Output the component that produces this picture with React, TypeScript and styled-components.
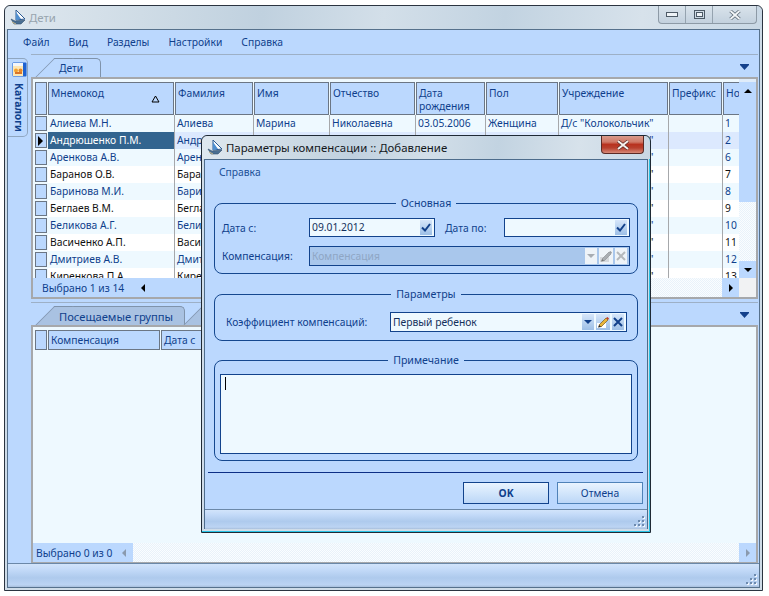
import styled, { createGlobalStyle } from 'styled-components';

const FONT = `"Noto Sans", "DejaVu Sans", sans-serif`;
const SIZE = '10.3px';
const NAVY = '#0f3f8c';
const PANEL = '#bbd8fe';
const LIGHT = '#eef9ff';
const GRAY = '#a6a8ab';
const HEAD_LINE = '#6b7684';

const Global = createGlobalStyle`
  html, body { margin: 0; padding: 0; background: #fff; }
  body { font: ${SIZE} ${FONT}; color: ${NAVY}; width: 769px; height: 596px; overflow: hidden; position: relative; }
`;

const Window = styled.div`
  width: 759px;
  height: 586px;
  margin: 5px 0 0 4px;
  box-sizing: border-box;
  border: 1px solid #2b3440;
  border-radius: 6px 6px 0 0;
  background: #cfdce8;
  display: flex;
  flex-direction: column;
  padding: 0 2px 2px;
`;

const TitleBar = styled.div<{ $dialog?: boolean }>`
  height: 23px;
  flex: none;
  display: flex;
  align-items: center;
  gap: 2px;
  font-size: 11.4px;
  color: ${(p) => (p.$dialog ? '#14181c' : '#98a4ae')};
  margin: 0 -2px;
  padding-left: 5px;
  border-radius: 6px 6px 0 0;
  background: linear-gradient(96deg, #dfe8ef 0%, #cfdce6 18%, #c0d1df 34%, #d3dfe9 50%, #c2d3e1 66%, #d7e2eb 84%, #c9d8e5 100%);
`;

const Title = styled.span`
  white-space: nowrap;
`;

const CaptionButtons = styled.div`
  margin-left: auto;
  margin-right: 5px;
  align-self: flex-start;
  display: flex;
  height: 17px;
  border: 1px solid #8d9aa6;
  border-top: none;
  border-radius: 0 0 4px 4px;
  background: linear-gradient(#d9e3eb, #c3d1de);
`;

const CaptionButton = styled.div<{ $w: number }>`
  width: ${(p) => p.$w}px;
  display: flex;
  align-items: center;
  justify-content: center;
  & + & { border-left: 1px solid #95a3af; }
`;

const CloseButton = styled.div`
  position: absolute;
  top: 0;
  right: 6px;
  width: 43px;
  height: 18px;
  box-sizing: border-box;
  border: 1px solid #5b2a25;
  border-top: none;
  border-radius: 0 0 4px 4px;
  background: linear-gradient(#d99a8c 0%, #d07a68 35%, #b8321f 50%, #b8402e 70%, #d88a78 100%);
  display: flex;
  align-items: center;
  justify-content: center;
`;

const Client = styled.div`
  flex: 1;
  min-height: 0;
  border: 1px solid #56718c;
  background: ${PANEL};
  display: flex;
  flex-direction: column;
`;

const MenuBar = styled.div`
  height: 24px;
  flex: none;
  display: flex;
  align-items: center;
  padding-left: 15px;
  gap: 19px;
`;

const MenuItem = styled.span`
  color: ${NAVY};
`;

const Body = styled.div`
  flex: 1;
  min-height: 0;
  display: flex;
`;

const Rail = styled.div`
  width: 23px;
  flex: none;
  padding-top: 4px;
`;

const RailTab = styled.div`
  width: 20px;
  height: 79px;
  box-sizing: border-box;
  border: 1px solid #8fa6c0;
  border-left: none;
  border-radius: 0 5px 5px 0;
  padding: 3px 0 0 3px;
  display: flex;
  flex-direction: column;
  align-items: center;
  gap: 6px;
`;

const RailLabel = styled.span`
  writing-mode: vertical-rl;
  font-weight: bold;
  line-height: 14px;
  color: ${NAVY};
`;

const Main = styled.div`
  flex: 1;
  min-width: 0;
  display: flex;
  flex-direction: column;
  margin-right: 1px;
`;

const TabStrip = styled.div<{ $h: number }>`
  height: ${(p) => p.$h}px;
  flex: none;
  box-sizing: border-box;
  border-top: 1px solid #9db0c6;
  border-bottom: 2px solid ${GRAY};
  display: flex;
  align-items: flex-end;
  justify-content: space-between;
  padding: 0 9px 0 24px;
`;

const Tabs = styled.div`
  display: flex;
  gap: 18px;
`;

const Tab = styled.div<{ $active?: boolean; $w: number }>`
  position: relative;
  width: ${(p) => p.$w}px;
  height: 19px;
  box-sizing: border-box;
  border: 1px solid #7f93ab;
  border-bottom: none;
  border-left: none;
  border-radius: 0 5px 0 0;
  background: ${(p) => (p.$active ? PANEL : '#a9c2e2')};
  color: ${NAVY};
  font-size: ${(p) => (p.$active ? SIZE : '11.2px')};
  display: flex;
  align-items: center;
  padding-left: 4px;
  white-space: nowrap;

  &::before {
    content: '';
    position: absolute;
    left: -10px;
    top: -1px;
    bottom: 0;
    width: 18px;
    background: ${(p) => (p.$active ? PANEL : '#a9c2e2')};
    border-left: 1px solid #7f93ab;
    border-top: 1px solid #7f93ab;
    transform: skewX(-45deg);
    z-index: 0;
  }
`;

const TabText = styled.span`
  position: relative;
  z-index: 1;
`;

const StripArrow = styled.svg`
  margin-bottom: 7px;
`;

const Frame = styled.div<{ $h: number }>`
  height: ${(p) => p.$h}px;
  flex: none;
  box-sizing: border-box;
  border: 2px solid ${GRAY};
  border-top: none;
  display: flex;
  flex-direction: column;
  background: ${LIGHT};
`;

const GridArea = styled.div`
  flex: 1;
  min-height: 0;
  display: flex;
  background: #dfecfa;
`;

const Table = styled.div`
  flex: 1;
  min-width: 0;
  overflow: hidden;
  padding: 3px 0 0 2px;
  background: ${LIGHT};
`;

const Row = styled.div<{ $cols: number[] }>`
  display: grid;
  grid-template-columns: ${(p) => p.$cols.map((c) => `${c}px`).join(' ')};
`;

const HeadCell = styled.div<{ $h: number; $pad: number; $open?: boolean }>`
  position: relative;
  height: ${(p) => p.$h}px;
  box-sizing: border-box;
  margin-right: ${(p) => (p.$open ? 0 : 1)}px;
  border: 1px solid ${HEAD_LINE};
  ${(p) => (p.$open ? 'border-right: none;' : '')}
  background: ${PANEL};
  color: ${NAVY};
  padding: ${(p) => p.$pad}px 0 0 2px;
  line-height: 13px;
  overflow: hidden;
  white-space: pre-line;
`;

const SortMark = styled.svg`
  position: absolute;
  right: 13px;
  bottom: 11px;
`;

const Indicator = styled.div`
  height: 17px;
  padding-right: 1px;
  box-sizing: border-box;
  display: flex;
`;

const IndicatorBox = styled.div`
  flex: 1;
  margin: 1px 0 0;
  height: 15px;
  box-sizing: border-box;
  border: 1px solid ${HEAD_LINE};
  background: ${PANEL};
  display: flex;
  align-items: center;
  padding-left: 2px;
`;

const Cell = styled.div<{ $odd: boolean; $current: boolean; $selected: boolean }>`
  height: 17px;
  box-sizing: border-box;
  padding-left: 2px;
  line-height: 16px;
  white-space: nowrap;
  overflow: hidden;
  border-right: 1px solid ${GRAY};
  background: ${(p) => (p.$selected ? '#32648f' : p.$current ? '#dce9fe' : p.$odd ? LIGHT : '#fff')};
  color: ${(p) => (p.$selected ? '#fff' : p.$odd || p.$current ? NAVY : '#111')};

  &:last-child { border-right: none; }
`;

const VScroll = styled.div`
  width: 17px;
  flex: none;
  margin-top: 3px;
  display: flex;
  flex-direction: column;
`;

const ScrollButton = styled.div`
  flex: none;
  width: 17px;
  height: 17px;
  background: ${PANEL};
  display: flex;
  align-items: center;
  justify-content: center;
`;

const HScrollButton = styled(ScrollButton)`
  height: auto;
`;

const Thumb = styled.div`
  height: 103px;
  flex: none;
  background: ${PANEL};
`;

const Track = styled.div`
  flex: 1;
  min-width: 0;
  background-color: #f4f9fd;
  background-image: repeating-conic-gradient(#e9f2fa 0 25%, #fafdff 0 50%);
  background-size: 2px 2px;
`;

const HRow = styled.div`
  height: 19px;
  flex: none;
  display: flex;
`;

const Selected = styled.div<{ $w: number; $pad: number; $gap: number }>`
  width: ${(p) => p.$w}px;
  flex: none;
  background: ${PANEL};
  display: flex;
  align-items: center;
  padding-left: ${(p) => p.$pad}px;
  box-sizing: border-box;
  color: ${NAVY};
  white-space: nowrap;
  gap: ${(p) => p.$gap}px;
`;

const Corner = styled.div`
  width: 17px;
  flex: none;
  background: #f1f2f3;
`;

const StripGap = styled.div`
  height: 3px;
  flex: none;
`;

const GripBar = styled.div<{ $h: number }>`
  height: ${(p) => p.$h}px;
  flex: none;
  box-sizing: border-box;
  border-top: 1px solid #6b88a8;
  background: linear-gradient(#d2e4fb 0%, #c3daf8 25%, #aecaed 60%, #bcd4f3 90%, #a8bfdc 100%);
  display: flex;
  justify-content: flex-end;
  align-items: flex-end;
  padding: 0 2px 2px 0;
`;

const Dialog = styled.div`
  position: absolute;
  left: 201px;
  top: 135px;
  width: 450px;
  height: 398px;
  box-sizing: border-box;
  border: 1px solid #1f2a35;
  border-radius: 6px 6px 0 0;
  background: #cfdce8;
  box-shadow: inset -1px -1px 0 #27c3e6;
  padding: 0 2px 3px;
  display: flex;
  flex-direction: column;
`;

const DialogClient = styled.div`
  flex: 1;
  min-height: 0;
  border: 1px solid #4d6c8c;
  background: ${PANEL};
  display: flex;
  flex-direction: column;
`;

const DialogMenu = styled.div`
  height: 24px;
  flex: none;
  display: flex;
  align-items: center;
  padding-left: 14px;
  color: #1c5096;
`;

const Group = styled.fieldset<{ $h: number; $top: number }>`
  margin: ${(p) => p.$top}px 9px 0;
  height: ${(p) => p.$h}px;
  box-sizing: border-box;
  padding: 0;
  border: 1px solid #15488f;
  border-radius: 8px;
  flex: none;
  min-width: 0;
`;

const Legend = styled.legend`
  margin: 0 auto;
  padding: 0 5px;
  font-size: 10.6px;
  line-height: 14px;
  color: ${NAVY};
`;

const MainFields = styled.div`
  display: grid;
  grid-template-columns: 87px 126px 69px 126px;
  row-gap: 9px;
  padding: 8px 0 0 7px;
  align-items: center;
`;

const FieldLabel = styled.label<{ $pad?: number }>`
  color: ${NAVY};
  padding-left: ${(p) => p.$pad ?? 0}px;
  white-space: nowrap;
`;

const Input = styled.div<{ $h: number; $disabled?: boolean; $span?: number }>`
  height: ${(p) => p.$h}px;
  box-sizing: border-box;
  border: 1px solid #12438c;
  background: ${(p) => (p.$disabled ? '#a9c7ec' : LIGHT)};
  color: ${(p) => (p.$disabled ? '#8fa6c4' : '#14305c')};
  display: flex;
  align-items: center;
  padding: 1px 2px;
  gap: 2px;
  ${(p) => (p.$span ? `grid-column: span ${p.$span};` : '')}
`;

const InputText = styled.span`
  flex: 1;
  min-width: 0;
  white-space: nowrap;
  margin-bottom: 1px;
`;

const InputButton = styled.div<{ $w: number; $disabled?: boolean }>`
  width: ${(p) => p.$w}px;
  align-self: stretch;
  flex: none;
  display: flex;
  align-items: center;
  justify-content: center;
  background: ${(p) => (p.$disabled ? '#eef3f8' : 'linear-gradient(#d6e6fa, #9dbfe6)')};
`;

const ParamRow = styled.div`
  display: flex;
  align-items: center;
  padding: 11px 10px 0 11px;
`;

const ParamLabel = styled(FieldLabel)`
  width: 164px;
  flex: none;
`;

const ParamInput = styled(Input)`
  flex: 1;
`;

const NoteWrap = styled.div`
  padding: 7px 5px 0;
`;

const NoteBox = styled.div`
  height: 80px;
  box-sizing: border-box;
  border: 1px solid #12438c;
  background: ${LIGHT};
  padding: 2px 4px;
`;

const Caret = styled.div`
  width: 1px;
  height: 13px;
  background: #000;
`;

const Separator = styled.div`
  height: 1px;
  flex: none;
  margin: 11px 4px 0 3px;
  background: #0c2f86;
`;

const ButtonRow = styled.div`
  display: flex;
  justify-content: flex-end;
  gap: 8px;
  flex: none;
  margin: 9px 4px 5px 0;
`;

const DialogButton = styled.button<{ $primary?: boolean }>`
  width: 86px;
  height: 22px;
  box-sizing: border-box;
  padding: 0 0 1px;
  font: ${(p) => (p.$primary ? 'bold' : 'normal')} ${SIZE} ${FONT};
  color: ${NAVY};
  border: 1px solid ${(p) => (p.$primary ? '#12438c' : '#4f82b8')};
  background: linear-gradient(#e9f4ff, #bcd7f7);
`;

const Logo = () => (
  <svg width="17" height="17" viewBox="0 0 17 17">
    <path d="M6 1 L15 10 L6 11 Z" fill="#fff" stroke="#2a5a94" strokeWidth="1" />
    <path d="M6 3 L6 11 L11 10 Z" fill="#4f8fd0" />
    <path d="M1 10 L5 12 L15 11 L11 15 L4 15 Z" fill="#4a6f92" stroke="#34506e" strokeWidth="0.6" />
    <path d="M2 13 L6 15" stroke="#c9b98a" strokeWidth="1" />
  </svg>
);

const RailIcon = () => (
  <svg width="15" height="15" viewBox="0 0 15 15">
    <rect x="0.5" y="0.5" width="14" height="14" rx="1" fill="#1f62d0" />
    <rect x="1" y="1" width="10" height="13" fill="#fde7b4" />
    <rect x="1" y="1" width="10" height="3" fill="#f3f6fb" />
    <circle cx="4" cy="8.5" r="2" fill="#f2a12e" />
    <circle cx="8.5" cy="8.5" r="2" fill="#e8882a" />
    <rect x="3" y="10" width="7" height="2" fill="#d9742a" />
  </svg>
);

const Triangle = ({ dir, color = '#000', size = 4 }: { dir: 'up' | 'down' | 'left' | 'right'; color?: string; size?: number }) => {
  const points = {
    up: `0,${size} ${size},0 ${size * 2},${size}`,
    down: `0,0 ${size},${size} ${size * 2},0`,
    left: `${size},0 ${size},${size * 2} 0,${size}`,
    right: `0,0 ${size},${size} 0,${size * 2}`,
  }[dir];
  const horizontal = dir === 'up' || dir === 'down';
  return (
    <svg width={horizontal ? size * 2 : size} height={horizontal ? size : size * 2}>
      <polygon points={points} fill={color} />
    </svg>
  );
};

const CheckIcon = () => (
  <svg width="10" height="9" viewBox="0 0 10 9">
    <path d="M1 4.5 L4 7.5 L9 1" fill="none" stroke="#12408a" strokeWidth="2" />
  </svg>
);

const CrossIcon = ({ color }: { color: string }) => (
  <svg width="10" height="10" viewBox="0 0 10 10">
    <path d="M1 1 L9 9 M9 1 L1 9" stroke={color} strokeWidth="2" />
  </svg>
);

const PencilIcon = ({ muted }: { muted?: boolean }) => (
  <svg width="12" height="12" viewBox="0 0 12 12">
    <rect x="0" y="7" width="9" height="5" fill={muted ? '#d5d8dc' : '#fff'} />
    <path d="M2 9 L9 2 L11 4 L4 11 Z" fill={muted ? '#a9adb2' : '#e8b53a'} stroke={muted ? '#8f9398' : '#7a5a20'} strokeWidth="0.7" />
    <path d="M9 2 L11 4 L12 2.5 L10.5 1 Z" fill={muted ? '#9a9ea3' : '#c2402c'} />
    <path d="M2 9 L1 11.5 L4 11 Z" fill={muted ? '#777' : '#222'} />
  </svg>
);

const Grip = () => (
  <svg width="11" height="11" viewBox="0 0 11 11">
    {[
      [8, 0],
      [4, 4],
      [8, 4],
      [0, 8],
      [4, 8],
      [8, 8],
    ].map(([x, y]) => (
      <g key={`${x}-${y}`}>
        <rect x={x + 1} y={y + 1} width="2" height="2" fill="#fff" opacity="0.8" />
        <rect x={x} y={y} width="2" height="2" fill="#6d8aae" />
      </g>
    ))}
  </svg>
);

const StripChevron = () => (
  <StripArrow width="9" height="6" viewBox="0 0 9 6">
    <path d="M0 0 H9 V1 L4.5 6 L0 1 Z" fill="#14418c" />
  </StripArrow>
);

const COLS = [13, 127, 79, 76, 86, 70, 73, 110, 54, 16];
const BOTTOM_COLS = [13, 113, 80];

const HEADERS = ['Мнемокод', 'Фамилия', 'Имя', 'Отчество', 'Дата\nрождения', 'Пол', 'Учреждение', 'Префикс', 'Но'];

const PEOPLE = [
  ['Алиева М.Н.', 'Алиева', 'Марина', 'Николаевна', '03.05.2006', 'Женщина', '1'],
  ['Андрюшенко П.М.', 'Андрюшенко', 'Полина', 'Михайловна', '12.02.2006', 'Женщина', '2'],
  ['Аренкова А.В.', 'Аренкова', 'Анна', 'Викторовна', '21.07.2006', 'Женщина', '6'],
  ['Баранов О.В.', 'Баранов', 'Олег', 'Викторович', '09.11.2005', 'Мужчина', '7'],
  ['Баринова М.И.', 'Баринова', 'Мария', 'Ивановна', '17.03.2006', 'Женщина', '8'],
  ['Беглаев В.М.', 'Беглаев', 'Виктор', 'Михайлович', '30.01.2006', 'Мужчина', '9'],
  ['Беликова А.Г.', 'Беликова', 'Анна', 'Геннадьевна', '14.06.2006', 'Женщина', '10'],
  ['Васиченко А.П.', 'Васиченко', 'Артём', 'Павлович', '05.09.2005', 'Мужчина', '11'],
  ['Дмитриев А.В.', 'Дмитриев', 'Антон', 'Васильевич', '26.04.2006', 'Женщина', '12'],
  ['Киренкова П.А.', 'Киренкова', 'Полина', 'Андреевна', '08.08.2006', 'Мужчина', '13'],
];

const App = () => {
  return (
    <>
      <Global />
      <Window>
        <TitleBar>
          <Logo />
          <Title>Дети</Title>
          <CaptionButtons>
            <CaptionButton $w={26}>
              <svg width="12" height="6"><rect x="0.5" y="0.5" width="11" height="4" fill="#eef3f7" stroke="#4d5a66" /></svg>
            </CaptionButton>
            <CaptionButton $w={26}>
              <svg width="11" height="10"><rect x="0.5" y="0.5" width="10" height="8" fill="none" stroke="#4d5a66" /><rect x="2.5" y="2.5" width="6" height="4" fill="#eef3f7" stroke="#4d5a66" /></svg>
            </CaptionButton>
            <CaptionButton $w={43}>
              <svg width="12" height="10" viewBox="0 0 12 10"><path d="M1.5 1 L10.5 9 M10.5 1 L1.5 9" stroke="#5b6874" strokeWidth="3.4" /><path d="M1.5 1 L10.5 9 M10.5 1 L1.5 9" stroke="#f3f6f8" strokeWidth="1.8" /></svg>
            </CaptionButton>
          </CaptionButtons>
        </TitleBar>
        <Client>
          <MenuBar>
            {['Файл', 'Вид', 'Разделы', 'Настройки', 'Справка'].map((m) => (
              <MenuItem key={m}>{m}</MenuItem>
            ))}
          </MenuBar>
          <Body>
            <Rail>
              <RailTab>
                <RailIcon />
                <RailLabel>Каталоги</RailLabel>
              </RailTab>
            </Rail>
            <Main>
              <TabStrip $h={25}>
                <Tabs>
                  <Tab $active $w={46}>
                    <TabText>Дети</TabText>
                  </Tab>
                </Tabs>
                <StripChevron />
              </TabStrip>
              <Frame $h={220}>
                <GridArea>
                  <Table>
                    <Row $cols={COLS}>
                      <HeadCell $h={33} $pad={4} />
                      {HEADERS.map((h, i) => (
                        <HeadCell $h={33} $pad={4} $open={i === HEADERS.length - 1} key={h}>
                          {h}
                          {i === 0 && (
                            <SortMark width="9" height="8" viewBox="0 0 9 8">
                              <path d="M4.5 1 L8 7 H1 Z" fill="none" stroke="#000" />
                            </SortMark>
                          )}
                        </HeadCell>
                      ))}
                    </Row>
                    {PEOPLE.map((p, i) => {
                      const odd = i % 2 === 0;
                      const current = i === 1;
                      const values = [p[0], p[1], p[2], p[3], p[4], p[5], 'Д/с "Колокольчик"', '', p[6]];
                      return (
                        <Row $cols={COLS} key={p[0]}>
                          <Indicator>
                            <IndicatorBox>{current && <Triangle dir="right" size={5} />}</IndicatorBox>
                          </Indicator>
                          {values.map((v, j) => (
                            <Cell key={j} $odd={odd} $current={current} $selected={current && j === 0}>
                              {v}
                            </Cell>
                          ))}
                        </Row>
                      );
                    })}
                  </Table>
                  <VScroll>
                    <ScrollButton>
                      <Triangle dir="up" />
                    </ScrollButton>
                    <Thumb />
                    <Track />
                    <ScrollButton>
                      <Triangle dir="down" />
                    </ScrollButton>
                  </VScroll>
                </GridArea>
                <HRow>
                  <Selected $w={172} $pad={9} $gap={17}>
                    Выбрано 1 из 14
                    <Triangle dir="left" />
                  </Selected>
                  <Track />
                  <HScrollButton>
                    <Triangle dir="right" />
                  </HScrollButton>
                  <Corner />
                </HRow>
              </Frame>
              <StripGap />
              <TabStrip $h={25}>
                <Tabs>
                  <Tab $w={130}>
                    <TabText>Посещаемые группы</TabText>
                  </Tab>
                  <Tab $w={90} />
                </Tabs>
                <StripChevron />
              </TabStrip>
              <Frame $h={237}>
                <GridArea>
                  <Table>
                    <Row $cols={BOTTOM_COLS}>
                      <HeadCell $h={20} $pad={3} />
                      <HeadCell $h={20} $pad={3}>Компенсация</HeadCell>
                      <HeadCell $h={20} $pad={3}>Дата с</HeadCell>
                    </Row>
                  </Table>
                </GridArea>
                <HRow>
                  <Selected $w={100} $pad={3} $gap={10}>
                    Выбрано 0 из 0
                    <Triangle dir="left" color="#8a9aae" />
                  </Selected>
                  <Track />
                  <HScrollButton>
                    <Triangle dir="right" color="#8a9aae" />
                  </HScrollButton>
                </HRow>
              </Frame>
            </Main>
          </Body>
          <GripBar $h={24}>
            <Grip />
          </GripBar>
        </Client>
      </Window>

      <Dialog>
        <TitleBar $dialog>
          <Logo />
          <Title>Параметры компенсации :: Добавление</Title>
          <CloseButton>
            <svg width="14" height="10" viewBox="0 0 14 10"><path d="M2 1 L12 9 M12 1 L2 9" stroke="#5b2a25" strokeWidth="3.4" /><path d="M2 1 L12 9 M12 1 L2 9" stroke="#f6f2ee" strokeWidth="2" /></svg>
          </CloseButton>
        </TitleBar>
        <DialogClient>
          <DialogMenu>Справка</DialogMenu>
          <Group $h={78} $top={12}>
            <Legend>Основная</Legend>
            <MainFields>
              <FieldLabel>Дата с:</FieldLabel>
              <Input $h={19}>
                <InputText>09.01.2012</InputText>
                <InputButton $w={12}><CheckIcon /></InputButton>
              </Input>
              <FieldLabel $pad={10}>Дата по:</FieldLabel>
              <Input $h={19}>
                <InputText />
                <InputButton $w={12}><CheckIcon /></InputButton>
              </Input>
              <FieldLabel>Компенсация:</FieldLabel>
              <Input $h={20} $disabled $span={3}>
                <InputText>Компенсация</InputText>
                <InputButton $w={12} $disabled><Triangle dir="down" color="#a8adb3" /></InputButton>
                <InputButton $w={14} $disabled><PencilIcon muted /></InputButton>
                <InputButton $w={12} $disabled><CrossIcon color="#b4b8bc" /></InputButton>
              </Input>
            </MainFields>
          </Group>
          <Group $h={54} $top={13}>
            <Legend>Параметры</Legend>
            <ParamRow>
              <ParamLabel>Коэффициент компенсаций:</ParamLabel>
              <ParamInput $h={20}>
                <InputText>Первый ребенок</InputText>
                <InputButton $w={12}><Triangle dir="down" color="#12408a" /></InputButton>
                <InputButton $w={14}><PencilIcon /></InputButton>
                <InputButton $w={12}><CrossIcon color="#12408a" /></InputButton>
              </ParamInput>
            </ParamRow>
          </Group>
          <Group $h={108} $top={12}>
            <Legend>Примечание</Legend>
            <NoteWrap>
              <NoteBox>
                <Caret />
              </NoteBox>
            </NoteWrap>
          </Group>
          <Separator />
          <ButtonRow>
            <DialogButton $primary>OK</DialogButton>
            <DialogButton>Отмена</DialogButton>
          </ButtonRow>
          <GripBar $h={20}>
            <Grip />
          </GripBar>
        </DialogClient>
      </Dialog>
    </>
  );
};

export default App;
